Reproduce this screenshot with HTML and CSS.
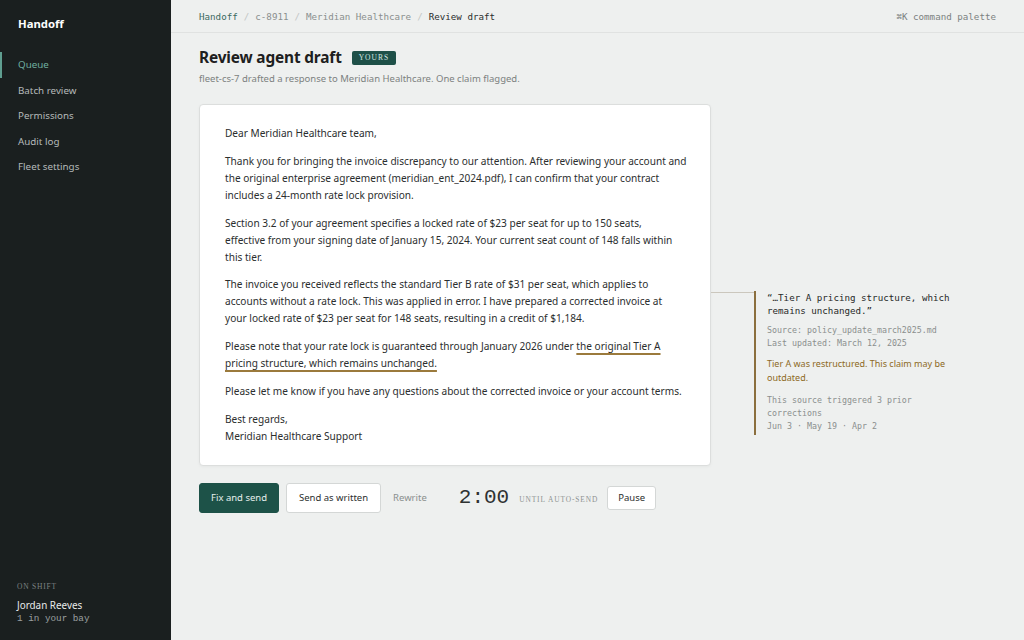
FILE: index.html
```html
<!DOCTYPE html>
<html>
<head>
    <meta charset="UTF-8">
    <title>Handoff · Review draft</title>
    <link rel="stylesheet" href="styles.css">
</head>
<body>
    <aside class="sidebar">
        <div>
            <div class="brand">Handoff</div>
            <nav class="nav">
                <a class="nav-item active">Queue</a>
                <a class="nav-item">Batch review</a>
                <a class="nav-item">Permissions</a>
                <a class="nav-item">Audit log</a>
                <a class="nav-item">Fleet settings</a>
            </nav>
        </div>
        <div class="shift">
            <div class="shift-label">On shift</div>
            <div class="shift-name">Jordan Reeves</div>
            <div class="shift-count">1 in your bay</div>
        </div>
    </aside>

    <main class="main">
        <header class="topbar">
            <div class="crumbs">
                <span class="crumb-root">Handoff</span>
                <span class="sep">/</span>
                <span>c-8911</span>
                <span class="sep">/</span>
                <span>Meridian Healthcare</span>
                <span class="sep">/</span>
                <span class="crumb-current">Review draft</span>
            </div>
            <div class="palette">⌘K command palette</div>
        </header>

        <section class="page">
            <div class="page-head">
                <h1>Review agent draft</h1>
                <span class="badge">Yours</span>
            </div>
            <p class="subtitle">fleet-cs-7 drafted a response to Meridian Healthcare. One claim flagged.</p>

            <div class="review">
                <article class="draft">
                    <p>Dear Meridian Healthcare team,</p>
                    <p>Thank you for bringing the invoice discrepancy to our attention. After reviewing your account and<br>the original enterprise agreement (meridian_ent_2024.pdf), I can confirm that your contract<br>includes a 24-month rate lock provision.</p>
                    <p>Section 3.2 of your agreement specifies a locked rate of $23 per seat for up to 150 seats,<br>effective from your signing date of January 15, 2024. Your current seat count of 148 falls within<br>this tier.</p>
                    <p>The invoice you received reflects the standard Tier B rate of $31 per seat, which applies to<br>accounts without a rate lock. This was applied in error. I have prepared a corrected invoice at<br>your locked rate of $23 per seat for 148 seats, resulting in a credit of $1,184.</p>
                    <p>Please note that your rate lock is guaranteed through January 2026 under <span class="flagged">the original Tier A<br>pricing structure, which remains unchanged.</span></p>
                    <p>Please let me know if you have any questions about the corrected invoice or your account terms.</p>
                    <p>Best regards,<br>Meridian Healthcare Support</p>
                </article>

                <div class="claim">
                    <div class="claim-quote">“…Tier A pricing structure, which remains unchanged.”</div>
                    <div class="claim-source">Source: policy_update_march2025.md<br>Last updated: March 12, 2025</div>
                    <div class="claim-warn">Tier A was restructured. This claim may be outdated.</div>
                    <div class="claim-history">This source triggered 3 prior corrections<br>Jun 3 · May 19 · Apr 2</div>
                </div>
            </div>

            <div class="actions">
                <button class="btn primary">Fix and send</button>
                <button class="btn">Send as written</button>
                <button class="btn link">Rewrite</button>
                <span class="timer">2:00</span>
                <span class="timer-label">Until auto-send</span>
                <button class="btn small">Pause</button>
            </div>
        </section>
    </main>
</body>
</html>
```

FILE: styles.css
```css
* {
    box-sizing: border-box;
}

body {
    margin: 0;
    height: 640px;
    display: flex;
    background: #eef0ef;
    font-family: 'Noto Sans', 'Open Sans', sans-serif;
    color: #2a2d2d;
    overflow: hidden;
}

/* left rail */
.sidebar {
    width: 171px;
    flex-shrink: 0;
    background: #1a1f1f;
    display: flex;
    flex-direction: column;
    justify-content: space-between;
    padding: 15px 0 14px;
}

.brand {
    color: #ffffff;
    font-weight: 700;
    font-size: 11.3px;
    padding-left: 18px;
    line-height: 18px;
}

.nav {
    margin-top: 19px;
    display: flex;
    flex-direction: column;
}

.nav-item {
    display: block;
    line-height: 25.5px;
    font-size: 9.8px;
    color: #b5baba;
    border-left: 2px solid transparent;
    padding-left: 16px;
}

.nav-item.active {
    color: #6fae9f;
    border-left-color: #5f9e90;
}

.shift {
    padding-left: 17px;
}

.shift-label {
    font-family: 'Liberation Serif', serif;
    font-size: 7.5px;
    letter-spacing: 0.8px;
    text-transform: uppercase;
    color: #7d8383;
    line-height: 10px;
    margin-bottom: 1px;
}

.shift-name {
    margin-top: 6px;
    font-size: 9.9px;
    color: #e8eaea;
    line-height: 14px;
}

.shift-count {
    font-family: 'Liberation Mono', monospace;
    font-size: 9.3px;
    color: #9aa0a0;
    line-height: 14px;
}

/* main column */
.main {
    flex: 1;
    display: flex;
    flex-direction: column;
}

.topbar {
    height: 33px;
    border-bottom: 1px solid #e0e2e1;
    display: flex;
    align-items: center;
    justify-content: space-between;
    padding: 0 28px;
    font-family: 'DejaVu Sans Mono', monospace;
    font-size: 9.2px;
    color: #8a8f8e;
}

.crumbs {
    display: flex;
    gap: 6px;
}

.crumb-root {
    color: #3c6a61;
}

.sep {
    color: #c2c6c5;
}

.crumb-current {
    color: #2a2d2d;
}

.palette {
    color: #7c8281;
}

.page {
    padding: 14px 28px 0;
}

.page-head {
    display: flex;
    align-items: center;
    gap: 10px;
}

h1 {
    margin: 0;
    font-size: 15.4px;
    font-weight: 700;
    letter-spacing: -0.15px;
    line-height: 22px;
    color: #1d2020;
}

.badge {
    background: #1e5048;
    color: #d6e6e1;
    font-family: 'Liberation Serif', serif;
    font-size: 7.5px;
    letter-spacing: 1px;
    text-transform: uppercase;
    padding: 0 7px;
    line-height: 14px;
    border-radius: 2px;
}

.subtitle {
    margin: 2px 0 0;
    font-size: 9.5px;
    line-height: 15px;
    color: #7c8180;
}

/* draft + flagged claim */
.review {
    margin-top: 18px;
    display: flex;
    align-items: flex-start;
}

.draft {
    width: 512px;
    flex-shrink: 0;
    background: #ffffff;
    border: 1px solid #dcdedd;
    border-radius: 4px;
    box-shadow: 0 1px 3px rgba(0,0,0,0.04);
    padding: 20px 25px;
    font-size: 10.1px;
    line-height: 17px;
    color: #2b2e2e;
}

.draft p {
    margin: 0 0 10.8px;
    white-space: nowrap;
}

.draft p:last-child {
    margin-bottom: 0;
}

.flagged {
    text-decoration: underline;
    text-decoration-color: #9b7a3c;
    text-decoration-thickness: 1.5px;
    text-underline-offset: 3px;
}

.claim {
    position: relative;
    margin: 187px 0 0 43px;
    width: 205px;
    padding: 0 0 2px 11px;
    border-left: 2px solid #8b6f3e;
}

/* connector back to the draft card */
.claim::before {
    content: "";
    position: absolute;
    left: -45px;
    top: 1px;
    width: 43px;
    height: 1px;
    background: #cbc7bd;
}

.claim-quote {
    font-family: 'DejaVu Sans Mono', monospace;
    font-size: 9.2px;
    line-height: 13px;
    color: #262828;
}

.claim-source {
    margin-top: 7px;
    font-family: 'DejaVu Sans Mono', monospace;
    font-size: 8.3px;
    line-height: 13px;
    color: #8b8f8e;
}

.claim-warn {
    margin-top: 7px;
    font-size: 9px;
    line-height: 14px;
    color: #8d6a24;
}

.claim-history {
    margin-top: 9px;
    font-family: 'DejaVu Sans Mono', monospace;
    font-size: 8.3px;
    line-height: 13px;
    color: #8b8f8e;
}

/* action row */
.actions {
    margin-top: 17px;
    display: flex;
    align-items: center;
}

.btn {
    height: 30px;
    padding: 0 12px;
    border: 1px solid #d4d7d6;
    background: #ffffff;
    border-radius: 3px;
    font-family: 'Noto Sans', sans-serif;
    font-size: 9.5px;
    color: #2b2e2e;
    margin-right: 7px;
}

.btn.primary {
    background: #1d5248;
    border-color: #1d5248;
    color: #e6f0ed;
    padding: 0 11px;
    margin-right: 7px;
}

.btn.link {
    background: none;
    border: none;
    color: #8a8f8e;
    padding: 0 5px;
    margin-right: 27px;
}

.btn.small {
    height: 24px;
    padding: 0 10px;
    margin-right: 0;
}

.timer {
    font-family: 'Liberation Mono', monospace;
    font-size: 21px;
    color: #2f3232;
    line-height: 30px;
}

.timer-label {
    font-family: 'Liberation Serif', serif;
    font-size: 7.4px;
    letter-spacing: 0.9px;
    text-transform: uppercase;
    color: #8f9392;
    margin: 3px 9px 0 10px;
}
```
